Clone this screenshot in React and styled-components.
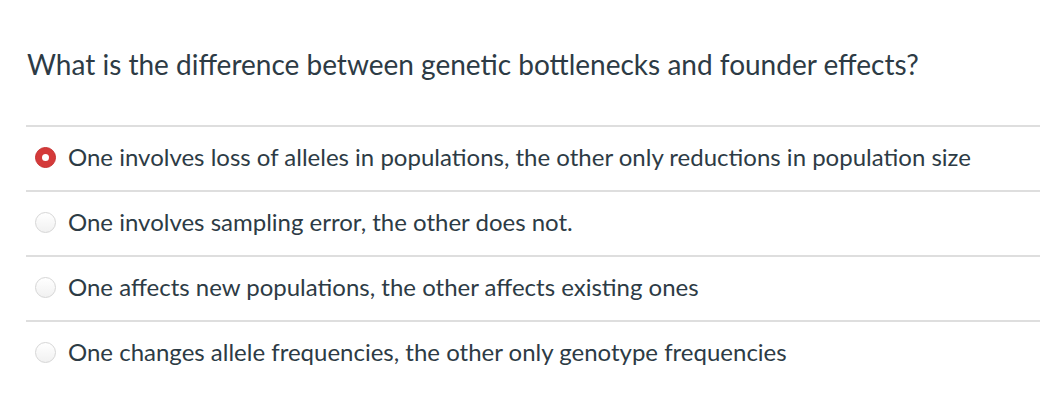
import React from "react";
import styled, { createGlobalStyle } from "styled-components";

const Global = createGlobalStyle`
  html, body { margin: 0; padding: 0; background: #fff; }
  body { font-family: Lato, "Open Sans", sans-serif; color: #2d3b45; }
`;

const Page = styled.div`
  padding: 47px 0 0 26px;
`;

const Question = styled.div`
  font-size: 28px;
  line-height: 34px;
  padding-left: 1px;
  margin-bottom: 44px;
`;

const List = styled.div`
  display: flex;
  flex-direction: column;
`;

const Row = styled.label`
  display: flex;
  align-items: center;
  box-sizing: border-box;
  height: 65px;
  border-top: 2px solid #dedede;
  padding: 0 0 4px 9px;
  gap: 12px;
  font-size: 24px;
`;

const Radio = styled.span`
  width: 21px;
  height: 21px;
  border-radius: 50%;
  box-sizing: border-box;
  flex: none;
  margin-top: 2px;
  ${(p) =>
    p.$checked
      ? `background: #d43a3a; border: 1px solid #c63030; display:flex; align-items:center; justify-content:center;
         &::after { content: ""; width: 7px; height: 7px; border-radius: 50%; background: #fff; }`
      : `background: linear-gradient(#ffffff, #f1f1f1); border: 1px solid #d6d6d6;`}
`;

const options = [
  { text: "One involves loss of alleles in populations, the other only reductions in population size", checked: true },
  { text: "One involves sampling error, the other does not." },
  { text: "One affects new populations, the other affects existing ones" },
  { text: "One changes allele frequencies, the other only genotype frequencies" },
];

export default function App() {
  return (
    <>
      <Global />
      <Page>
        <Question>What is the difference between genetic bottlenecks and founder effects?</Question>
        <List>
          {options.map((o, i) => (
            <Row key={i}>
              <Radio $checked={o.checked} />
              <span>{o.text}</span>
            </Row>
          ))}
        </List>
      </Page>
    </>
  );
}
